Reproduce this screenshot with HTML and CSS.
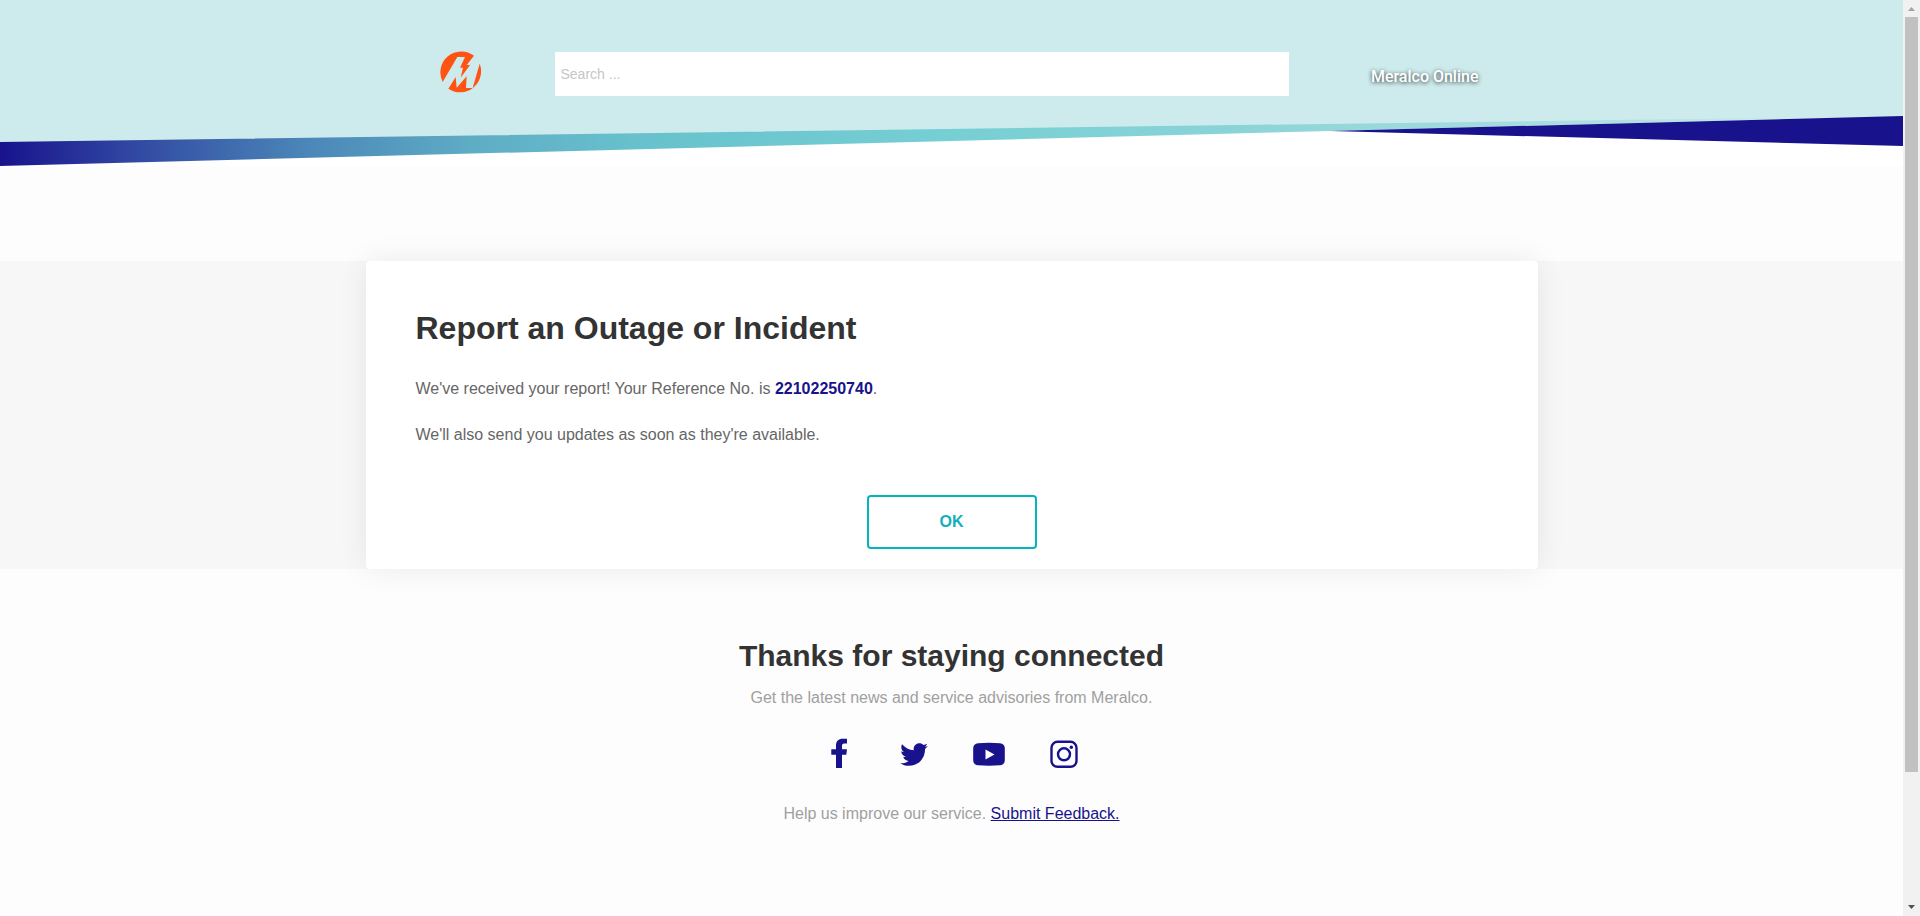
FILE: index.html
```html
<!DOCTYPE html>
<html lang="en">
<head>
<meta charset="utf-8">
<meta name="viewport" content="width=device-width, initial-scale=1">
<title>Report an Outage or Incident</title>
<link rel="stylesheet" href="styles.css">
</head>
<body>
<div class="page">
  <header class="header">
    <svg class="header-art" viewBox="0 0 1903 166" preserveAspectRatio="none" aria-hidden="true">
      <defs>
        <linearGradient id="band" gradientUnits="userSpaceOnUse" x1="0" y1="0" x2="1903" y2="0">
          <stop offset="0" stop-color="#18138c"/>
          <stop offset="0.07" stop-color="#3148a2"/>
          <stop offset="0.16" stop-color="#4b86b8"/>
          <stop offset="0.25" stop-color="#5fadc5"/>
          <stop offset="0.34" stop-color="#68c2cd"/>
          <stop offset="0.5" stop-color="#76cfd3"/>
          <stop offset="0.65" stop-color="#8ad4d8"/>
          <stop offset="0.85" stop-color="#b0e0e2"/>
          <stop offset="0.95" stop-color="#cdebec"/>
        </linearGradient>
      </defs>
      <path fill="#fff" d="M0 0h1903v166H0z"/>
      <path fill="#cdebec" d="M0 0h1903v117L0 143z"/>
      <path fill="url(#band)" d="M0 142 1903 116 1330 131 0 166z"/>
      <path fill="#18138c" d="M1330 131 1903 116v30z"/>
    </svg>
    <div class="header-bar">
      <a class="logo" href="#" aria-label="Meralco home">
        <svg viewBox="0 0 126 126" aria-hidden="true">
          <path d="M8 93A63 63 0 0 1 102 14L80 42H90L62 80 69 50H60L75 18H52z"/>
          <path d="M119 38A63 63 0 0 1 25 113L47 78 50 110 80 76 78 111H98z"/>
        </svg>
      </a>
      <input class="search" type="search" placeholder="Search ..." aria-label="Search">
      <a class="online" href="#">Meralco Online</a>
    </div>
  </header>
  <main class="report">
    <section class="card">
      <h1>Report an Outage or Incident</h1>
      <p>We've received your report! Your Reference No. is <strong>22102250740</strong>.</p>
      <p>We'll also send you updates as soon as they're available.</p>
      <button class="ok" type="button">OK</button>
    </section>
  </main>
  <footer class="footer">
    <h2>Thanks for staying connected</h2>
    <p>Get the latest news and service advisories from Meralco.</p>
    <nav class="social" aria-label="Social media">
      <a href="#" aria-label="Facebook"><svg viewBox="0 0 32 32"><path d="M13 30V16.700H8.300v-5.400H13V7.500C13 3 15.500.7 19.700.7H24v4.800h-2.700c-1.800 0-2.300.9-2.300 2.400v3.400h5l-.7 5.400H19V30z"/></svg></a>
      <a href="#" aria-label="Twitter"><svg viewBox="-40 -50 592 592"><path d="M459.370 151.716c.325 4.548.325 9.097.325 13.645 0 138.720-105.583 298.558-298.558 298.558-59.452 0-114.680-17.219-161.137-47.106 8.447.974 16.568 1.299 25.340 1.299 49.055 0 94.213-16.568 130.274-44.832-46.132-.975-84.792-31.188-98.112-72.772 6.498.974 12.995 1.624 19.818 1.624 9.421 0 18.843-1.300 27.614-3.573-48.081-9.747-84.143-51.980-84.143-102.985v-1.299c13.969 7.797 30.214 12.670 47.431 13.319-28.264-18.843-46.781-51.005-46.781-87.391 0-19.492 5.197-37.360 14.294-52.954 51.655 63.675 129.300 105.258 216.365 109.807-1.624-7.797-2.599-15.918-2.599-24.040 0-57.828 46.782-104.934 104.934-104.934 30.213 0 57.502 12.670 76.670 33.137 23.715-4.548 46.456-13.320 66.599-25.340-7.798 24.366-24.366 44.833-46.132 57.827 21.117-2.273 41.584-8.122 60.426-16.243-14.292 20.791-32.161 39.308-52.628 54.253z"/></svg></a>
      <a href="#" aria-label="YouTube"><svg viewBox="0 0 32 32"><path fill-rule="evenodd" d="M5 5.300q11-.9 22 0 4.500.4 4.800 4.700v12.500q-.3 4.300-4.800 4.700-11 .9-22 0-4.500-.4-4.800-4.700V10Q.5 5.700 5 5.300zM12.500 11.500v10l9-5z"/></svg></a>
      <a href="#" aria-label="Instagram"><svg viewBox="0 0 32 32"><g class="outline"><rect x="3.500" y="3.800" width="25" height="25" rx="6"/><circle cx="16" cy="16.300" r="6"/></g><circle cx="23.300" cy="9.200" r="1.700"/></svg></a>
    </nav>
    <p>Help us improve our service. <a class="feedback" href="#">Submit Feedback.</a></p>
  </footer>
</div>
<div class="scrollbar" aria-hidden="true">
  <svg viewBox="0 0 17 17"><path fill="#a3a3a3" d="M5 11h7L8.500 7z"/></svg>
  <div class="thumb"></div>
  <svg viewBox="0 0 17 17"><path fill="#505050" d="M5 6h7L8.500 10z"/></svg>
</div>
</body>
</html>
```
FILE: styles.css
```css
* {
  box-sizing: border-box;
}

body {
  margin: 0;
  display: flex;
  min-height: 100vh;
  background: #fdfdfd;
  color: #666;
  font-family: "Liberation Sans", Arial, sans-serif;
  font-size: 16px;
  line-height: 24px;
}

h1,
h2,
p {
  margin: 0;
}

h1,
h2 {
  color: #333;
  line-height: 40px;
}

.page {
  flex: 1;
  min-width: 0;
}

.header {
  position: relative;
  height: 166px;
  padding-top: 51px;
}

.header-art {
  position: absolute;
  inset: 0;
  width: 100%;
  height: 100%;
}

.header-bar {
  position: relative;
  display: flex;
  align-items: flex-start;
  max-width: 1172px;
  margin: 0 auto;
  padding: 0 59px 0 74px;
}

.logo {
  width: 42px;
  height: 42px;
  margin-right: 73px;
}

.logo svg {
  display: block;
  fill: #ff5314;
}

.search {
  flex: 1;
  min-width: 0;
  height: 44px;
  margin-top: 1px;
  padding: 0 6px;
  border: 0;
  border-radius: 0;
  background: #fff;
  color: #333;
  font: inherit;
  font-size: 14px;
}

.search::placeholder {
  color: #c6c6c6;
}

.online {
  margin-left: 82px;
  padding-top: 14px;
  color: #fff;
  font-family: Roboto, sans-serif;
  font-weight: 500;
  text-decoration: none;
  text-shadow: 0 1px 4px rgba(0, 0, 0, 0.8);
}

.report {
  margin-top: 95px;
  background: #f7f7f7;
}

.card {
  display: flex;
  flex-direction: column;
  gap: 22px;
  max-width: 1172px;
  margin: 0 auto;
  padding: 47px 50px 20px;
  border-radius: 4px;
  background: #fff;
  box-shadow: 0 0 30px rgba(0, 0, 0, 0.08);
}

.card h1 {
  margin-bottom: 7px;
  font-size: 32px;
}

.card strong {
  color: #18138c;
}

.ok {
  align-self: center;
  width: 170px;
  height: 54px;
  margin-top: 26px;
  border: 2px solid #00b5bd;
  border-radius: 4px;
  background: #fff;
  color: #14aebd;
  font: inherit;
  font-weight: 700;
}

.footer {
  padding: 67px 24px 48px;
  color: #a0a0a0;
  text-align: center;
}

.footer h2 {
  margin-bottom: 10px;
  font-size: 30px;
}

.social {
  display: flex;
  justify-content: center;
  gap: 43px;
  margin: 28px 0 32px;
}

.social a {
  width: 32px;
  height: 32px;
}

.social svg {
  display: block;
  fill: #18138c;
}

.social .outline {
  fill: none;
  stroke: #18138c;
  stroke-width: 2.4;
}

.feedback {
  color: #18138c;
}

.scrollbar {
  display: flex;
  flex-direction: column;
  align-items: center;
  width: 17px;
  background: #f1f1f1;
}

.scrollbar svg {
  width: 17px;
  height: 17px;
}

.thumb {
  width: 13px;
  height: 755px;
  margin-bottom: auto;
  background: #c1c1c1;
}
```
